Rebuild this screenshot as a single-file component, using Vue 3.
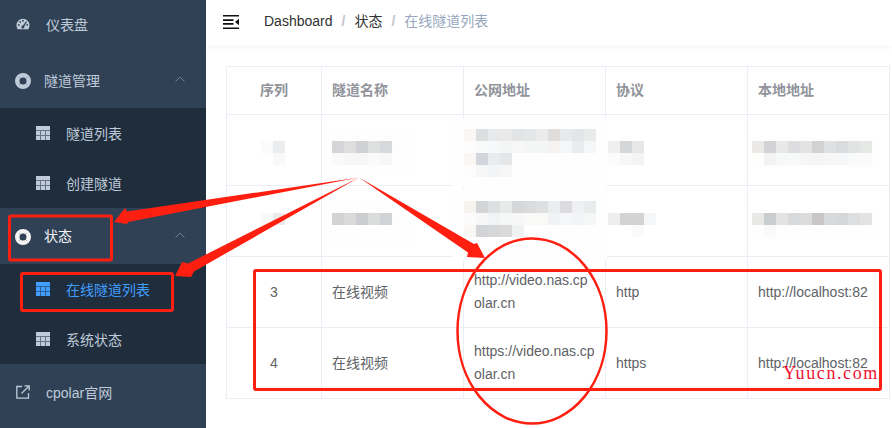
<script setup>
const rows = [
  {
    shift: 6,
    cells: [
      { x: -3, halo: 0, m: [['#fbfbfb', '#ebecee'], ['#ffffff', '#f9f9fa']] },
      { x: 0, halo: 10, m: [['#d5d5d7', '#dedede', '#d0d1d5', '#dfe0e0', '#d7d8db', '#fdfdfd'], ['#f9f9f9', '#f6f6f7', '#f6f6f6', '#fafafa', '#f7f7f8', '#fefefe']] },
      { x: -10, halo: 11, m: [
        ['#f9f6f3', '#dcdee0', '#e8e9eb', '#e9e9ea', '#e3e4e6', '#e5e6e8', '#ebebec', '#dfdedd', '#e7e9eb', '#e3e5e7', '#e9ebeb'],
        ['#fcfcfd', '#f9fafa', '#f7f8f9', '#f4f5f5', '#f7f7f8', '#f4f6f6', '#f4f5f5', '#f5f3f2', '#f5f6f7', '#e9ebed', '#f5f6f8'],
        ['#f9f6f3', '#d2d6dc', '#eaebed', '#e5e6e7', '#fefefe', '#fefefe', '#fefefe', '#fefefe', '#fefefe', '#fefefe', '#fefefe'],
        ['#fcfcfc', '#f6f6f7', '#f3f4f5', '#f6f6f7', '#fefefe', '#fefefe', '#fefefe', '#fefefe', '#fefefe', '#fefefe', '#fefefe']
      ] },
      { x: -8, halo: 0, m: [['#eeefee', '#d5d6d8', '#e6e7e6'], ['#fbfbfb', '#f7f7f7', '#f4f4f4']] },
      { x: -6, halo: 4, m: [
        ['#eae9e8', '#d3d3d6', '#e8e8e9', '#dddde0', '#e3e3e4', '#d2d2d3', '#dfe0e1', '#dadbdf', '#e2e4e3', '#e6e8e6'],
        ['#fdfdfb', '#f3f3f4', '#f7f8f8', '#f8f9f9', '#f6f6f7', '#f5f5f6', '#f6f6f7', '#f6f7f8', '#f9fafa', '#fafafa']
      ] }
    ]
  },
  {
    shift: 8,
    cells: [
      { x: -3, halo: 0, m: [['#f9f9f7', '#eaeaea'], [null, null]] },
      { x: 0, halo: 10, m: [['#d3d3d4', '#dadadb', '#cccdd1', '#dbdcdc', '#d2d3d6', '#fdfdfd'], [null, null, null, null, null, null]] },
      { x: -10, halo: 11, m: [
        ['#f7f4ef', '#d4d5d7', '#dde0e0', '#e8e9e9', '#d6d7d9', '#dadbdd', '#dfe0e1', '#ecedee', '#dcdce0', '#eef0f2', '#e9ecec'],
        ['#fbfbfb', '#f7f7f7', '#f2f3f4', '#f6f7f7', '#f7f7f7', '#f9f9f8', '#f9f9f8', '#f1f2f3', '#f6f7f8', '#f3f4f5', '#f5f6f6'],
        ['#f8f7f6', '#d3d4d7', '#d6d7d9', '#dadada', '#f0f1f1', '#fefefe', '#fefefe', '#fefefe', '#fefefe', '#fefefe', '#fefefe'],
        ['#fefefe', '#fefefe', '#fefefe', '#fefefe', '#fefefe', '#fefefe', '#fefefe', '#fefefe', '#fefefe', '#fefefe', '#fefefe']
      ] },
      { x: -8, halo: 0, m: [['#eeeeee', '#d3d3d4', '#d3d3d4', '#f5f6f8'], [null, null, '#fafafa', null]] },
      { x: -6, halo: 4, m: [
        ['#e8e8e7', '#c9cdd0', '#e3e3e3', '#d8dadb', '#dcdcdc', '#c8c6c7', '#d8d9db', '#d6d7d9', '#dddee0', '#e3e3e3'],
        ['#fefefe', '#fafafa', '#fefefe', '#fefefe', '#fefefe', '#fefefe', '#fefefe', '#fefefe', '#fefefe', '#fefefe']
      ] }
    ]
  }
]

const records = [
  { id: 3, name: '在线视频', url: 'http://video.nas.cpolar.cn', proto: 'http', local: 'http://localhost:82' },
  { id: 4, name: '在线视频', url: 'https://video.nas.cpolar.cn', proto: 'https', local: 'http://localhost:82' }
]

function maskStyle(cell, shift) {
  return {
    marginLeft: cell.x + 'px',
    marginTop: shift + 'px',
    boxShadow: cell.halo ? `0 0 0 ${cell.halo}px #fefefe` : 'none'
  }
}
</script>

<template>
  <div class="app">
    <aside class="sidebar">
      <a class="item first">
        <svg class="ico" viewBox="0 0 16 14" width="16" height="14">
          <path fill="currentColor" d="M8 1a7.500 7.500 0 0 0-7.500 7.500c0 1.600.5 3 1.300 4.200.2.2.4.3.6.3h11.200c.2 0 .4-.1.6-.3.800-1.200 1.300-2.600 1.300-4.200A7.500 7.500 0 0 0 8 1z"/>
          <g fill="#304156">
            <circle cx="3.200" cy="8" r="1"/><circle cx="4.800" cy="4.600" r="1"/><circle cx="8" cy="3.200" r="1"/><circle cx="12.800" cy="8" r="1"/>
            <path d="M11.700 3.900 12.600 4.500 9.400 9.800a1.700 1.700 0 1 1-1.500-1z"/>
          </g>
        </svg>
        <span class="label">仪表盘</span>
      </a>
      <a class="item group">
        <svg class="ring" viewBox="0 0 16 16" width="16" height="16">
          <circle cx="8" cy="8" r="5.750" fill="none" stroke="currentColor" stroke-width="4.500"/>
          <path d="M3.900 3.900 5.500 5.500M12.100 3.900 10.500 5.500M3.900 12.100 5.500 10.500M12.100 12.100 10.500 10.500" stroke="#304156" stroke-width=".7" opacity=".5"/>
        </svg>
        <span class="label">隧道管理</span>
        <svg class="chev" viewBox="0 0 10 6" width="10" height="6"><path d="M.5 5.500 5 1l4.500 4.500" fill="none" stroke="currentColor"/></svg>
      </a>
      <div class="sub">
        <a class="sub-item">
          <svg class="grid" viewBox="0 0 14 14" width="14" height="14"><path fill="currentColor" d="M0 0h14v14H0z"/><path d="M4.500 4v10M9.500 4v10M0 4.500h14M0 9.500h14" stroke="#1f2d3d" stroke-width="1" opacity=".55"/></svg>
          <span>隧道列表</span>
        </a>
        <a class="sub-item">
          <svg class="grid" viewBox="0 0 14 14" width="14" height="14"><path fill="currentColor" d="M0 0h14v14H0z"/><path d="M4.500 4v10M9.500 4v10M0 4.500h14M0 9.500h14" stroke="#1f2d3d" stroke-width="1" opacity=".55"/></svg>
          <span>创建隧道</span>
        </a>
      </div>
      <a class="item group open">
        <svg class="ring" viewBox="0 0 16 16" width="16" height="16">
          <circle cx="8" cy="8" r="5.750" fill="none" stroke="currentColor" stroke-width="4.500"/>
          <path d="M3.900 3.900 5.500 5.500M12.100 3.900 10.500 5.500M3.900 12.100 5.500 10.500M12.100 12.100 10.500 10.500" stroke="#304156" stroke-width=".7" opacity=".5"/>
        </svg>
        <span class="label">状态</span>
        <svg class="chev" viewBox="0 0 10 6" width="10" height="6"><path d="M.5 5.500 5 1l4.500 4.500" fill="none" stroke="currentColor"/></svg>
      </a>
      <div class="sub">
        <a class="sub-item active">
          <svg class="grid" viewBox="0 0 14 14" width="14" height="14"><path fill="currentColor" d="M0 0h14v14H0z"/><path d="M4.500 4v10M9.500 4v10M0 4.500h14M0 9.500h14" stroke="#1f2d3d" stroke-width="1" opacity=".55"/></svg>
          <span>在线隧道列表</span>
        </a>
        <a class="sub-item">
          <svg class="grid" viewBox="0 0 14 14" width="14" height="14"><path fill="currentColor" d="M0 0h14v14H0z"/><path d="M4.500 4v10M9.500 4v10M0 4.500h14M0 9.500h14" stroke="#1f2d3d" stroke-width="1" opacity=".55"/></svg>
          <span>系统状态</span>
        </a>
      </div>
      <a class="item">
        <svg class="ico" viewBox="0 0 14 14" width="14" height="14">
          <path d="M6 1.500H.8v11.700h11.700V8M5.500 8.500 13 1M8.500.8h4.700v4.700" fill="none" stroke="currentColor" stroke-width="1.300"/>
        </svg>
        <span class="label">cpolar官网</span>
      </a>
    </aside>

    <main class="main">
      <header class="navbar">
        <svg class="burger" viewBox="0 0 16 14" width="16" height="14">
          <path fill="#111" d="M0 0h16v1.400H0zM0 12.600h16V14H0zM0 4.200h10.500v1.800H0zM0 8h10.500v1.800H0zM12 7l4-3.200v6.400z"/>
        </svg>
        <nav class="crumbs">
          <span class="crumb">Dashboard</span><i>/</i>
          <span class="crumb cn">状态</span><i>/</i>
          <span class="crumb cn last">在线隧道列表</span>
        </nav>
      </header>

      <section class="content">
        <table class="tunnels">
          <colgroup>
            <col class="c-id" /><col class="c-w" /><col class="c-w" /><col class="c-w" /><col class="c-w" />
          </colgroup>
          <thead>
            <tr>
              <th class="center">序列</th>
              <th>隧道名称</th>
              <th>公网地址</th>
              <th>协议</th>
              <th>本地地址</th>
            </tr>
          </thead>
          <tbody>
            <tr v-for="(row, r) in rows" :key="'m' + r">
              <td v-for="(cell, c) in row.cells" :key="c">
                <div class="slot" :class="{ mid: c === 0 }">
                  <div class="mask" :style="maskStyle(cell, row.shift)">
                    <div v-for="(line, l) in cell.m" :key="l" class="mask-row">
                      <b v-for="(color, i) in line" :key="i" :style="{ background: color || 'transparent' }"></b>
                    </div>
                  </div>
                </div>
              </td>
            </tr>
            <tr v-for="rec in records" :key="rec.id">
              <td class="center">{{ rec.id }}</td>
              <td>{{ rec.name }}</td>
              <td>{{ rec.url }}</td>
              <td>{{ rec.proto }}</td>
              <td>{{ rec.local }}</td>
            </tr>
          </tbody>
        </table>
      </section>
    </main>

    <svg class="marks" viewBox="0 0 892 428" width="892" height="428">
      <g fill="none" stroke="#ff1f10" stroke-width="3" stroke-linejoin="round">
        <rect x="9.500" y="216" width="102" height="44" rx="1.500"/>
        <rect x="21.500" y="273.500" width="151" height="37" rx="1.500"/>
        <rect x="254.500" y="270.500" width="626" height="119" rx="1.500"/>
        <ellipse cx="532" cy="331" rx="74.500" ry="92.500" stroke-width="2.500"/>
      </g>
      <g fill="#ff1f10">
        <path d="M359 177.500 127 211.500 125 208 114 222 127 224 128 222z"/>
        <path d="M359 177.500 188 263.500 182 262 175 276 191 277 194 271.500z"/>
        <path d="M359 177.500 474 244 477 243 485 258 467 257 468 252.500z"/>
      </g>
    </svg>
    <span class="stamp">Yuucn.com</span>
  </div>
</template>

<style scoped>
.app {
  position: relative;
  display: flex;
  width: 892px;
  height: 428px;
  overflow: hidden;
  background: #fff;
  font-family: "Liberation Sans", "Noto Sans CJK SC", sans-serif;
  font-size: 14px;
  color: #606266;
}
.sidebar {
  flex: 0 0 206px;
  background: #304156;
  color: #bfcbd9;
}
.item {
  display: flex;
  align-items: center;
  height: 56px;
  padding-left: 16px;
}
.item.first {
  height: 53px;
  padding-bottom: 6px;
  box-sizing: border-box;
}
.item .ico { flex: none; margin-right: 16px; width: 14px; }
.item.group { padding-left: 15px; height: 55px; position: relative; }
.item.group .label { margin-top: -2px; }
.item.group.open { height: 56px; color: #f4f4f5; }
.ring { flex: none; margin-right: 13px; margin-top: 1px; }
.chev { position: absolute; left: 175px; top: 23px; color: #6f7d8e; }
.open .chev { top: 24px; }
.sub { background: #1f2d3d; }
.sub-item {
  display: flex;
  align-items: center;
  height: 50px;
  padding-left: 36px;
}
.grid { flex: none; margin-right: 16px; }
.sub-item.active { color: #409eff; }
.main {
  flex: 1;
  min-width: 0;
}
.navbar {
  display: flex;
  align-items: center;
  height: 46px;
  padding-left: 17px;
  padding-bottom: 6px;
  box-sizing: border-box;
  box-shadow: 0 1px 4px rgba(0, 21, 41, 0.06);
}
.burger { flex: none; margin-right: 25px; margin-top: 4px; }
.crumbs { display: flex; align-items: center; color: #303133; margin-top: 2px; }
.crumbs i { font-style: normal; color: #c0c4cc; margin: 0 9px; font-weight: 700; }
.crumb.cn { margin-top: -2px; }
.crumb.last { color: #97a8be; }
.content { padding: 20px 0 0 20px; }
.tunnels {
  width: 663px;
  table-layout: fixed;
  border-collapse: collapse;
}
.c-id { width: 95px; }
.c-w { width: 142px; }
.tunnels th,
.tunnels td {
  border: 1px solid #ebeef5;
  padding: 12px 10px;
  line-height: 23px;
  text-align: left;
  vertical-align: middle;
  word-break: break-all;
  font-weight: 400;
}
.tunnels th { color: #909399; font-weight: 700; }
.tunnels .center { text-align: center; }
.slot {
  display: flex;
  align-items: center;
  height: 46px;
}
.slot.mid { justify-content: center; }
.mask { flex: none; }
.mask-row { display: flex; height: 12px; }
.mask-row b { display: block; width: 12px; height: 12px; }
.marks {
  position: absolute;
  left: 0;
  top: 0;
  pointer-events: none;
}
.stamp {
  position: absolute;
  left: 783px;
  top: 363px;
  font-family: "Liberation Serif", serif;
  font-size: 18px;
  line-height: 20px;
  letter-spacing: 1.600px;
  color: #f0102f;
}
</style>

<style>
html, body { margin: 0; background: #fff; }
</style>
